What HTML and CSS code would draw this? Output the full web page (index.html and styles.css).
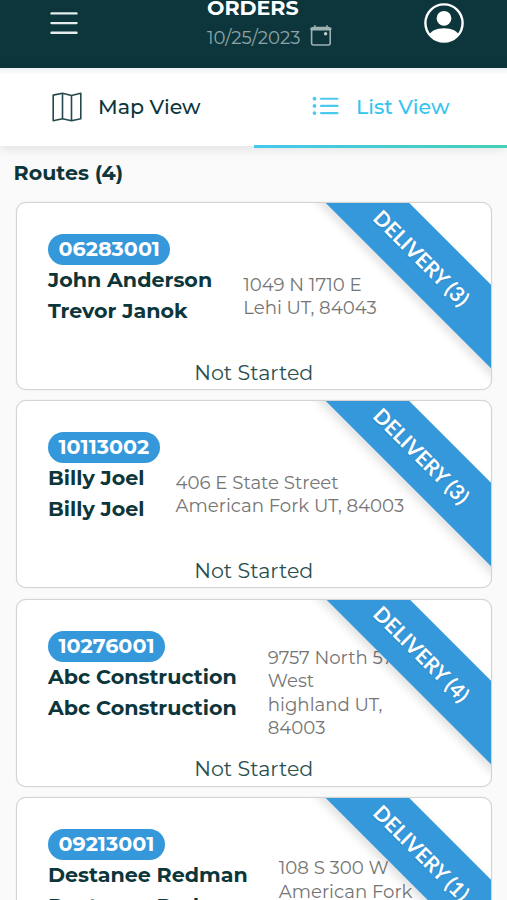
FILE: index.html
```html
<!DOCTYPE html>
<html lang="en">
<head>
<meta charset="utf-8">
<title>Orders</title>
<link rel="stylesheet" href="styles.css">
</head>
<body>
<header class="topbar">
  <svg class="menu-icon" width="28" height="24" viewBox="0 0 28 24"><path d="M1.5 2.4h25M1.5 12.1h25M1.5 21.8h25"/></svg>
  <div class="heading">
    <h1 class="title">ORDERS</h1>
    <div class="date"><span class="date-text">10/25/2023</span>
      <svg class="calendar-icon" width="22" height="22" viewBox="0 0 22 22"><rect x="1.6" y="2.6" width="18.6" height="17.4" rx="2"/><path class="calendar-top" d="M1.6 4h18.6"/><path d="M4.9 .8v2M17 .8v2"/><circle cx="15.6" cy="8.7" r="1.7"/></svg>
    </div>
  </div>
  <svg class="avatar-icon" width="40" height="40" viewBox="0 0 40 40"><defs><clipPath id="face"><circle cx="20" cy="20" r="18.5"/></clipPath></defs><circle class="ring" cx="20" cy="20" r="18.6"/><circle cx="20" cy="15.3" r="7.4"/><path clip-path="url(#face)" d="M4 34C6.500 28 12 25.300 20 25.300S33.500 28 36 34V40H4z"/></svg>
</header>
<nav class="tabs">
  <a class="tab tab-map">
    <svg class="map-icon" width="30" height="30" viewBox="0 0 30 30"><path d="M1.2 3.100 10.500 1.300l9 2.200 9.300-2.200v25.400l-9.300 2-9-2-9.300 2zM10.500 1.300v25.400M19.500 3.500v25.200"/></svg>
    <span>Map View</span>
  </a>
  <a class="tab tab-list active">
    <svg class="list-icon" width="27" height="20" viewBox="0 0 27 20"><path d="M9 2.700h16.500M9 9.900h16.500M9 17.100h16.500"/><circle cx="2.500" cy="2.700" r="1.900"/><circle cx="2.500" cy="9.900" r="1.900"/><circle cx="2.500" cy="17.100" r="1.900"/></svg>
    <span>List View</span>
  </a>
</nav>
<main class="routes">
  <h2 class="routes-title">Routes (4)</h2>
  <article class="card">
    <span class="pill">06283001</span>
    <div class="details">
      <div class="names"><span>John Anderson</span><span>Trevor Janok</span></div>
      <div class="address"><span>1049 N 1710 E</span><span>Lehi UT, 84043</span></div>
    </div>
    <div class="status">Not Started</div>
    <div class="ribbon">DELIVERY (3)</div>
  </article>
  <article class="card">
    <span class="pill">10113002</span>
    <div class="details">
      <div class="names"><span>Billy Joel</span><span>Billy Joel</span></div>
      <div class="address"><span>406 E State Street</span><span>American Fork UT, 84003</span></div>
    </div>
    <div class="status">Not Started</div>
    <div class="ribbon">DELIVERY (3)</div>
  </article>
  <article class="card">
    <span class="pill">10276001</span>
    <div class="details">
      <div class="names"><span>Abc Construction</span><span>Abc Construction</span></div>
      <div class="address"><span>9757 North 57</span><span>West</span><span>highland UT,</span><span>84003</span></div>
    </div>
    <div class="status">Not Started</div>
    <div class="ribbon">DELIVERY (4)</div>
  </article>
  <article class="card">
    <span class="pill">09213001</span>
    <div class="details">
      <div class="names"><span>Destanee Redman</span><span>Destanee Redman</span></div>
      <div class="address"><span>108 S 300 W</span><span>American Fork</span><span>UT, 84003</span></div>
    </div>
    <div class="status">Not Started</div>
    <div class="ribbon">DELIVERY (1)</div>
  </article>
</main>
</body>
</html>
```
FILE: styles.css
```css
* { box-sizing: border-box; }
html, body { height: 100%; overflow: hidden; }
body {
  margin: 0;
  background: #fafafa;
  color: #0d363b;
  font-family: Montserrat, Inter, sans-serif;
  display: flex;
  flex-direction: column;
}
h1, h2 { margin: 0; }
svg { display: block; flex: none; fill: none; stroke-linecap: round; stroke-linejoin: round; }

.topbar {
  flex: none;
  height: 68px;
  background: #0c363c;
  display: grid;
  grid-template-columns: 207px 1fr auto;
  align-items: start;
  padding-right: 43px;
}
.menu-icon { margin: 11px 0 0 50px; stroke: #e4ecec; stroke-width: 2.4; }
.title {
  margin-top: -4px;
  font-size: 20.6px;
  line-height: 24px;
  color: #fff;
}
.date { display: flex; align-items: center; gap: 9px; height: 34px; color: #8ea4a7; }
.date-text { font-size: 18.1px; }
.calendar-icon { stroke: #9fb0b2; stroke-width: 1.6; margin-top: -3px; }
.calendar-icon .calendar-top { stroke-width: 2.8; }
.calendar-icon circle { fill: #c4cfd0; stroke: none; }
.avatar-icon { margin-top: 3px; fill: #fff; }
.avatar-icon .ring { fill: none; stroke: #fff; stroke-width: 2.4; }

.tabs {
  flex: none;
  height: 78px;
  display: grid;
  grid-template-columns: 254px 1fr;
  background: linear-gradient(#eff0f2, #fff 7px);
  box-shadow: 0 3px 10px rgba(0, 0, 0, .1);
}
.tab { display: flex; align-items: center; height: 77px; font-size: 20.6px; font-weight: 500; }
.tab-map { padding-left: 52px; gap: 16px; }
.tab-list { padding-left: 58px; gap: 17px; height: 80px; }
.active {
  color: #35c4ee;
  border-bottom: 3px solid;
  border-image: linear-gradient(90deg, #43c8ec, #45d0b8) 1;
}
.map-icon { stroke: #24494d; stroke-width: 1.6; }
.list-icon { stroke: #4cc9ef; stroke-width: 2.1; margin-top: -1px; }
.list-icon circle { fill: #4cc9ef; stroke: none; }

.routes { flex: none; padding: 15px 15.500px 0 16px; }
.routes-title { margin: 0 0 17px -2.500px; font-size: 20.6px; line-height: 24px; }
.card {
  position: relative;
  overflow: hidden;
  height: 188px;
  margin-bottom: 10.400px;
  padding: 31px 31px 0;
  background: #fff;
  border: 1px solid #d4d4d4;
  border-radius: 10px;
  box-shadow: 0 0 1px #ccc;
  display: flex;
  flex-direction: column;
  align-items: flex-start;
}
.pill {
  height: 31px;
  padding: 0 10.500px;
  border-radius: 16px;
  background: #3498db;
  color: #fff;
  font-size: 20.7px;
  font-weight: 700;
  line-height: 30px;
}
.details { display: flex; align-items: center; gap: 31px; height: 62px; }
.names { display: flex; flex-direction: column; font-size: 20.65px; font-weight: 700; line-height: 31px; white-space: nowrap; margin-top: -2px; }
.address { display: flex; flex-direction: column; color: #757575; font-size: 18.15px; line-height: 23.300px; white-space: nowrap; }
.status { align-self: center; margin-top: 32.500px; border-top: 1px solid #fffff0; font-size: 20.6px; line-height: 24px; color: #28504f; }
.ribbon {
  position: absolute;
  left: 255.300px;
  top: 24.500px;
  width: 300px;
  height: 59px;
  background: #3498db;
  box-shadow: 0 5px 10px rgba(0, 0, 0, .12);
  color: #fff;
  font: 700 20.8px/59px Lato, sans-serif;
  text-align: center;
  text-shadow: 0 1px 1px rgba(0, 0, 0, .15);
  transform: rotate(45deg);
}
```
